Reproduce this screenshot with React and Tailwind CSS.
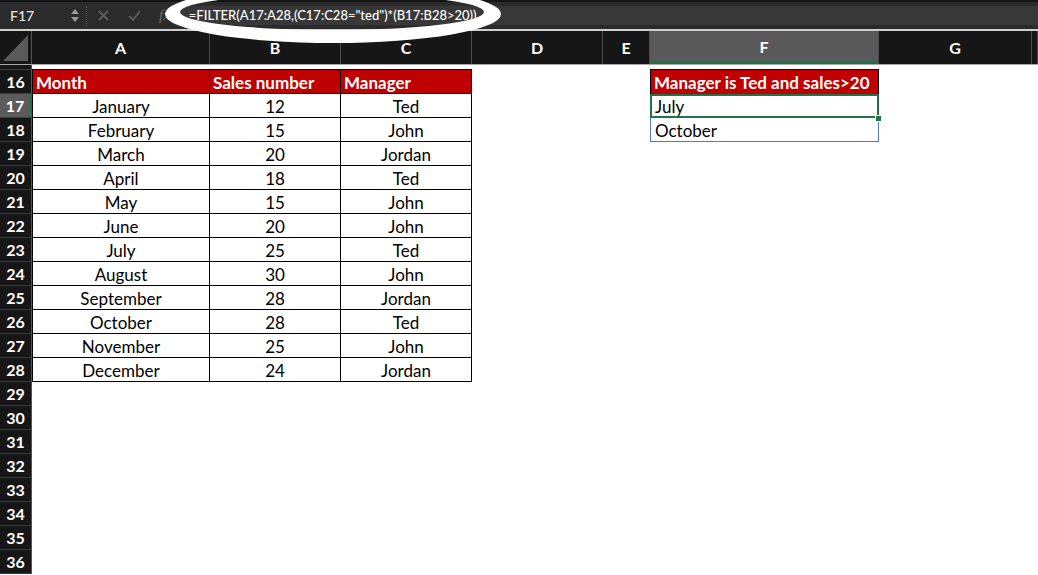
import React from "react";

const cols = [
  { k: "A", w: "w-[178px]" },
  { k: "B", w: "w-[131px]" },
  { k: "C", w: "w-[131px]" },
  { k: "D", w: "w-[131px]" },
  { k: "E", w: "w-[47px]" },
  { k: "F", w: "w-[229px]" },
  { k: "G", w: "w-[153px]" },
  { k: "", w: "flex-1" },
];

const sales = [
  ["January", 12, "Ted"],
  ["February", 15, "John"],
  ["March", 20, "Jordan"],
  ["April", 18, "Ted"],
  ["May", 15, "John"],
  ["June", 20, "John"],
  ["July", 25, "Ted"],
  ["August", 30, "John"],
  ["September", 28, "Jordan"],
  ["October", 28, "Ted"],
  ["November", 25, "John"],
  ["December", 24, "Jordan"],
];

const font = { fontFamily: "Lato, 'Noto Sans', sans-serif" };

const RowHead = ({ n, active, h = "h-[24px]" }) => (
  <div
    className={`w-[32px] ${h} shrink-0 flex items-center justify-center border-b border-[#3c3c3c] text-white font-bold text-[16px] ${
      active ? "bg-[#5b5b5b] border-r-2 border-r-[#217346]" : "bg-[#161616] border-r border-r-[#555]"
    }`}
  >
    {n}
  </div>
);

const FormulaBar = () => (
  <div className="h-[31px] flex items-center bg-[#2b2b2b] border-t-2 border-t-[#141414] border-b-2 border-b-[#cfcfcf]">
    <div className="w-[68px] pl-[10px] text-[14px] text-[#e6e6e6] font-medium">F17</div>
    <div className="flex flex-col items-center gap-[3px] w-[14px]">
      <svg width="8" height="5" viewBox="0 0 8 5"><polygon points="4,0 8,5 0,5" fill="#9a9a9a" /></svg>
      <svg width="8" height="5" viewBox="0 0 8 5"><polygon points="0,0 8,0 4,5" fill="#9a9a9a" /></svg>
    </div>
    <div className="h-[20px] ml-[4px] border-l border-dotted border-[#5a5a5a]" />
    <svg className="ml-[11px]" width="11" height="11" viewBox="0 0 11 11">
      <path d="M1 1L10 10M10 1L1 10" stroke="#5e5e5e" strokeWidth="1.8" />
    </svg>
    <svg className="ml-[19px]" width="13" height="11" viewBox="0 0 13 11">
      <path d="M1 6L5 10L12 1" stroke="#5e5e5e" strokeWidth="1.8" fill="none" />
    </svg>
    <div className="ml-[18px] text-[#707070] italic text-[15px]" style={{ fontFamily: "'Liberation Serif', serif" }}>
      fx
    </div>
    <div className="flex-1 h-[19px] ml-[6px] bg-[#383838] flex items-center pl-[13px] text-[13px] text-white font-medium" style={font}>
      =FILTER(A17:A28,(C17:C28="ted")*(B17:B28&gt;20))
    </div>
  </div>
);

const ColHeader = () => (
  <div className="h-[34px] flex border-b border-[#a8a8a8] bg-[#161616]">
    <div className="w-[32px] shrink-0 border-r border-[#555] flex items-end justify-end pr-[3px] pb-[3px]">
      <svg width="25" height="26" viewBox="0 0 25 26"><polygon points="25,0 25,26 0,26" fill="#5a5a5a" /></svg>
    </div>
    {cols.map((c, i) => (
      <div
        key={i}
        className={`${c.w} shrink-0 flex items-center justify-center border-r border-[#4a4a4a] text-white font-bold text-[16px] ${
          c.k === "F" ? "bg-[#595959] border-b-2 border-b-[#1d7044]" : ""
        }`}
      >
        {c.k}
      </div>
    ))}
  </div>
);

const Cell = ({ w, className = "", children }) => (
  <div className={`${w} shrink-0 h-full flex items-center pt-[2px] ${className}`}>{children}</div>
);

export default function App() {
  const rows = [];
  for (let n = 16; n <= 36; n++) rows.push(n);

  return (
    <div className="relative w-[1038px] h-[575px] overflow-hidden bg-white" style={font}>
      <FormulaBar />
      <ColHeader />

      {/* partial row 15 */}
      <div className="flex h-[5px]">
        <RowHead n="" h="h-[5px]" />
        <Cell w="w-[178px]" className="border-b border-black" />
        <Cell w="w-[131px]" className="border-b border-black" />
        <Cell w="w-[131px]" className="border-b border-black" />
        <Cell w="w-[131px]" />
        <Cell w="w-[47px]" />
        <Cell w="w-[229px]" className="border-b border-black" />
      </div>

      {rows.map((n) => {
        const d = sales[n - 17];
        return (
          <div key={n} className="flex h-[24px] text-[17px] text-black">
            <RowHead n={n} active={n === 17} />
            {n === 16 ? (
              <>
                <Cell w="w-[178px]" className="bg-[#c00000] border-l border-r border-b border-black text-white font-bold pl-[3px]">Month</Cell>
                <Cell w="w-[131px]" className="bg-[#c00000] border-r border-b border-black text-white font-bold pl-[3px]">Sales number</Cell>
                <Cell w="w-[131px]" className="bg-[#c00000] border-r border-b border-black text-white font-bold pl-[3px]">Manager</Cell>
              </>
            ) : d ? (
              <>
                <Cell w="w-[178px]" className="border-l border-r border-b border-black justify-center">{d[0]}</Cell>
                <Cell w="w-[131px]" className="border-r border-b border-black justify-center">{d[1]}</Cell>
                <Cell w="w-[131px]" className="border-r border-b border-black justify-center">{d[2]}</Cell>
              </>
            ) : (
              <>
                <Cell w="w-[178px]" />
                <Cell w="w-[131px]" />
                <Cell w="w-[131px]" />
              </>
            )}
            <Cell w="w-[131px]" />
            <Cell w="w-[47px]" />
            {n === 16 && (
              <Cell w="w-[229px]" className="bg-[#c00000] border-l border-r border-black text-white font-bold pl-[3px]">
                Manager is Ted and sales&gt;20
              </Cell>
            )}
            {n === 17 && (
              <Cell w="w-[229px]" className="relative border-l border-r border-[#4a7bd0] pl-[4px]">
                July
                <div className="absolute -left-[1px] -right-[1px] top-0 bottom-0 border-2 border-[#217346]" />
                <div className="absolute -right-[4px] -bottom-[4px] w-[7px] h-[7px] bg-[#217346] border border-white" />
              </Cell>
            )}
            {n === 18 && (
              <Cell w="w-[229px]" className="border-l border-r border-b border-[#4a7bd0] pl-[4px]">October</Cell>
            )}
          </div>
        );
      })}

      {/* hand-drawn annotation ring round the formula */}
      <svg className="absolute left-0 top-0 pointer-events-none" width="520" height="50" viewBox="0 0 520 50">
        <path
          fillRule="evenodd"
          fill="#ffffff"
          d="M165 14 A168 29 0 1 0 501 14 A168 29 0 1 0 165 14 Z M180 12 A152 18 0 1 1 484 12 A152 18 0 1 1 180 12 Z"
        />
      </svg>
    </div>
  );
}
